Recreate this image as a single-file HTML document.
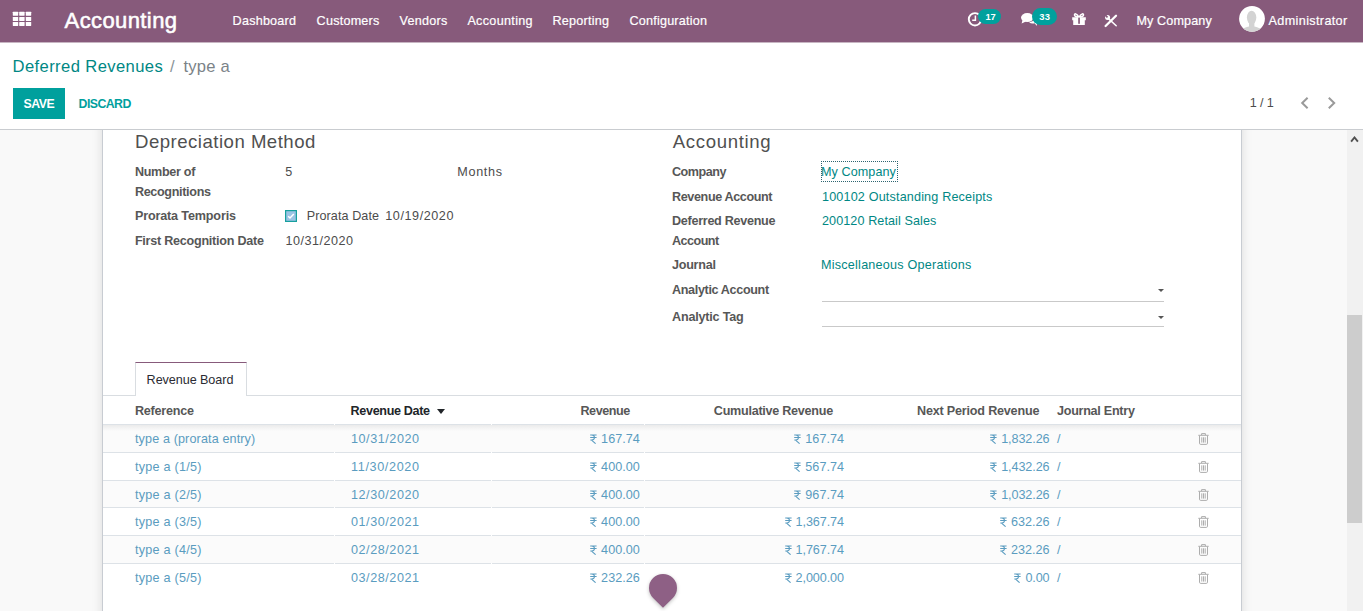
<!DOCTYPE html>
<html lang="en">
<head>
<meta charset="utf-8">
<title>Odoo - type a</title>
<style>
html,body{margin:0;padding:0;}
body{width:1365px;height:611px;overflow:hidden;background:#fff;position:relative;font-family:"Liberation Sans",sans-serif;font-size:12.6px;color:#4c4c4c;}
.a{position:absolute;display:block;}
.t{position:absolute;white-space:nowrap;display:block;}
#navbar{position:absolute;left:0;top:0;width:1363px;height:42px;background:#875A7B;box-shadow:0 1px 0 #c7b5c2;}
#cp{position:absolute;left:0;top:42px;width:1363px;height:86px;background:#fff;border-top:1px solid #c7b5c2;border-bottom:1px solid #c9ccd0;}
#content{position:absolute;left:0;top:130px;width:1347px;height:481px;background:#f9f9f9;overflow:hidden;}
#sheet{position:absolute;left:102px;top:-60px;width:1138px;height:620px;background:#fff;border:1px solid #c8ccd2;box-shadow:0 0 12px -2px rgba(0,0,0,.16);}
#vscroll{position:absolute;left:1347px;top:130px;width:16px;height:481px;background:#f1f1f1;}
#vthumb{position:absolute;left:0;top:185px;width:15px;height:208px;background:#cdcdcd;}
.btn-save{position:absolute;left:13px;top:88px;width:52px;height:30.6px;background:#00A09D;border-radius:0;}
.badge{position:absolute;background:#00A09D;border-radius:9px;}
.uline{position:absolute;height:1px;background:#c9c9c9;left:822px;width:342px;}
.caret{position:absolute;width:0;height:0;border-left:3.2px solid transparent;border-right:3.2px solid transparent;border-top:3.4px solid #555;}
.rowline{position:absolute;left:103px;width:1138px;height:1px;background:#dde2e7;}
.stripe{position:absolute;left:103px;width:1138px;height:27px;background:#fbfbfb;}
.gap{position:absolute;width:1px;height:1px;background:#fff;}
</style>
</head>
<body>

<div id="content"><div id="sheet"></div></div>
<div id="vscroll"><svg class="a" style="left:3px;top:6px" width="9" height="7" viewBox="0 0 9 7"><path d="M1.1 5.7L4.5 1.5L7.9 5.7" fill="none" stroke="#505050" stroke-width="1.9"/></svg><div id="vthumb"></div></div>
<div id="navbar">
<svg class="a" style="left:12px;top:11px" width="20" height="16" viewBox="12 11 20 16" fill="#fff">
<rect x="12.8" y="11.8" width="5.4" height="3.9" rx="0.4"/>
<rect x="12.8" y="17" width="5.4" height="3.9" rx="0.4"/>
<rect x="12.8" y="22.1" width="5.4" height="3.9" rx="0.4"/>
<rect x="19.2" y="11.8" width="5.4" height="3.9" rx="0.4"/>
<rect x="19.2" y="17" width="5.4" height="3.9" rx="0.4"/>
<rect x="19.2" y="22.1" width="5.4" height="3.9" rx="0.4"/>
<rect x="25.8" y="11.8" width="5.4" height="3.9" rx="0.4"/>
<rect x="25.8" y="17" width="5.4" height="3.9" rx="0.4"/>
<rect x="25.8" y="22.1" width="5.4" height="3.9" rx="0.4"/>
</svg>
<svg class="a" style="left:966px;top:10px" width="18" height="18" viewBox="966 10 18 18"><circle cx="975" cy="19.3" r="6.2" fill="none" stroke="#fff" stroke-width="1.9"/><path d="M975.4 15.6V20.2H972.2" fill="none" stroke="#fff" stroke-width="1.5"/></svg>
<div class="badge" style="left:978px;top:8.8px;width:23px;height:15.2px;border-radius:7.6px"></div>
<svg class="a" style="left:1020px;top:12px" width="18" height="15" viewBox="1020 12 18 15" fill="#fff"><ellipse cx="1027.3" cy="17.6" rx="6.3" ry="4.5"/><path d="M1022.5 20L1021.6 23.6L1026 21.6Z"/><path d="M1029 22.6C1031 23.8 1033.5 23.6 1034.6 23.2L1037 26L1036.6 22C1037.6 21 1037.6 19 1036 17.6L1033 21Z"/></svg>
<div class="badge" style="left:1032px;top:7.7px;width:25px;height:17.5px;border-radius:8.75px"></div>
<svg class="a" style="left:1071px;top:12px" width="16" height="14" viewBox="1071 12 16 14"><path d="M1072.2 17.2H1085.8V20.2H1072.2Z M1073.2 20.2H1084.8V25H1073.2Z" fill="#fff"/><path d="M1079 17.2C1077 13 1073.8 13.2 1074.6 15.4C1075 16.6 1077 17 1079 17.2C1081 13 1084.2 13.2 1083.4 15.4C1083 16.6 1081 17 1079 17.2Z" fill="none" stroke="#fff" stroke-width="1.5"/><rect x="1078.2" y="17.6" width="1.7" height="6.2" fill="#875A7B"/></svg>
<svg class="a" style="left:1103px;top:13px" width="16" height="15" viewBox="1103 13 16 15"><path d="M1105.6 26L1116 15.8" stroke="#fff" stroke-width="2.3" stroke-linecap="round" fill="none"/><path d="M1108.2 18.4L1116.2 25.8" stroke="#fff" stroke-width="1.5" stroke-linecap="round" fill="none"/><circle cx="1107.6" cy="17.4" r="2.5" fill="#fff"/><path d="M1104.4 14.2L1107.5 17.3" stroke="#875A7B" stroke-width="1.7" fill="none"/></svg>
<svg class="a" style="left:1238px;top:5px" width="28" height="28" viewBox="0 0 28 28"><defs><clipPath id="av"><circle cx="14" cy="13.8" r="12.9"/></clipPath></defs><circle cx="14" cy="13.8" r="12.9" fill="#fff"/><g clip-path="url(#av)" fill="#d3d3d3"><ellipse cx="13.6" cy="12.6" rx="4.7" ry="6.8"/><path d="M11 17H16.4V21.5C19 22 22 23 23.5 24.5V28H3.5V24.5C5 23 8.4 22 11 21.5Z"/></g></svg>
<span class="t" id="t0" style="left:64.60px;top:4.25px;font-size:22px;line-height:33px;color:#fff;letter-spacing:0.398px;-webkit-text-stroke:0.55px #fff;">Accounting</span>
<span class="t" id="t1" style="left:232.60px;top:11.80px;font-size:12.6px;line-height:18.9px;color:#fff;letter-spacing:0.224px;-webkit-text-stroke:0.2px #fff;">Dashboard</span>
<span class="t" id="t2" style="left:316.60px;top:11.80px;font-size:12.6px;line-height:18.9px;color:#fff;letter-spacing:0.227px;-webkit-text-stroke:0.2px #fff;">Customers</span>
<span class="t" id="t3" style="left:399.40px;top:11.80px;font-size:12.6px;line-height:18.9px;color:#fff;letter-spacing:0.281px;-webkit-text-stroke:0.2px #fff;">Vendors</span>
<span class="t" id="t4" style="left:467.40px;top:11.80px;font-size:12.6px;line-height:18.9px;color:#fff;letter-spacing:0.321px;-webkit-text-stroke:0.2px #fff;">Accounting</span>
<span class="t" id="t5" style="left:552.40px;top:11.80px;font-size:12.6px;line-height:18.9px;color:#fff;letter-spacing:0.250px;-webkit-text-stroke:0.2px #fff;">Reporting</span>
<span class="t" id="t6" style="left:629.40px;top:11.80px;font-size:12.6px;line-height:18.9px;color:#fff;letter-spacing:0.224px;-webkit-text-stroke:0.2px #fff;">Configuration</span>
<span class="t" id="t7" style="left:1136.40px;top:11.80px;font-size:12.6px;line-height:18.9px;color:#fff;letter-spacing:0.124px;-webkit-text-stroke:0.2px #fff;">My Company</span>
<span class="t" id="t8" style="left:1268.60px;top:11.80px;font-size:12.6px;line-height:18.9px;color:#fff;letter-spacing:0.367px;-webkit-text-stroke:0.2px #fff;">Administrator</span>
<span class="t" id="t9" style="left:985.40px;top:9.70px;font-size:9.4px;line-height:14.1px;color:#fff;font-weight:700;letter-spacing:-0.214px;">17</span>
<span class="t" id="t10" style="left:1039.30px;top:9.70px;font-size:9.4px;line-height:14.1px;color:#fff;font-weight:700;letter-spacing:0.186px;">33</span>
</div>
<div id="cp" style="top:42px"></div>
<div class="btn-save"></div>
<span class="t" id="t11" style="left:12.60px;top:54.90px;font-size:16.6px;line-height:24.9px;color:#008784;letter-spacing:0.388px;">Deferred Revenues</span>
<span class="t" id="t12" style="left:170.00px;top:54.90px;font-size:16.6px;line-height:24.9px;color:#8a9499;">/</span>
<span class="t" id="t13" style="left:183.60px;top:54.90px;font-size:16.6px;line-height:24.9px;color:#7b8388;letter-spacing:0.165px;">type a</span>
<span class="t" id="t14" style="left:23.40px;top:95.03px;font-size:12.3px;line-height:18.45px;color:#fff;font-weight:700;letter-spacing:-0.390px;">SAVE</span>
<span class="t" id="t15" style="left:78.60px;top:95.03px;font-size:12.3px;line-height:18.45px;color:#00A09D;font-weight:700;letter-spacing:-0.557px;">DISCARD</span>
<span class="t" id="t16" style="left:1249.80px;top:93.60px;font-size:12.6px;line-height:18.9px;color:#4c4c4c;letter-spacing:-0.150px;">1 / 1</span>
<svg class="a" style="left:1299px;top:96px" width="11" height="14" viewBox="0 0 11 14"><path d="M8.6 1.7L3.2 7L8.6 12.3" fill="none" stroke="#9a9a9a" stroke-width="2"/></svg>
<svg class="a" style="left:1326px;top:96px" width="11" height="14" viewBox="0 0 11 14"><path d="M2.8 1.7L8.2 7L2.8 12.3" fill="none" stroke="#9a9a9a" stroke-width="2"/></svg>
<span class="t" id="t17" style="left:135.00px;top:128.30px;font-size:18.6px;line-height:27.9px;color:#505050;letter-spacing:0.487px;">Depreciation Method</span>
<span class="t" id="t18" style="left:672.80px;top:128.30px;font-size:18.6px;line-height:27.9px;color:#505050;letter-spacing:0.649px;">Accounting</span>
<span class="t" id="t19" style="left:134.90px;top:162.80px;font-size:12.6px;line-height:18.9px;color:#575757;font-weight:700;letter-spacing:-0.309px;">Number of</span>
<span class="t" id="t20" style="left:134.90px;top:182.80px;font-size:12.6px;line-height:18.9px;color:#575757;font-weight:700;letter-spacing:-0.333px;">Recognitions</span>
<span class="t" id="t21" style="left:134.90px;top:206.80px;font-size:12.6px;line-height:18.9px;color:#575757;font-weight:700;letter-spacing:-0.149px;">Prorata Temporis</span>
<span class="t" id="t22" style="left:134.90px;top:231.80px;font-size:12.6px;line-height:18.9px;color:#575757;font-weight:700;letter-spacing:-0.250px;">First Recognition Date</span>
<span class="t" id="t23" style="left:285.30px;top:162.80px;font-size:12.6px;line-height:18.9px;color:#4c4c4c;">5</span>
<span class="t" id="t24" style="left:457.30px;top:162.80px;font-size:12.6px;line-height:18.9px;color:#4c4c4c;letter-spacing:0.680px;">Months</span>
<span class="t" id="t25" style="left:306.70px;top:206.80px;font-size:12.6px;line-height:18.9px;color:#4c4c4c;letter-spacing:0.082px;">Prorata Date</span>
<span class="t" id="t26" style="left:385.30px;top:206.80px;font-size:12.6px;line-height:18.9px;color:#4c4c4c;letter-spacing:0.564px;">10/19/2020</span>
<span class="t" id="t27" style="left:285.50px;top:231.80px;font-size:12.6px;line-height:18.9px;color:#4c4c4c;letter-spacing:0.497px;">10/31/2020</span>
<span class="t" id="t28" style="left:672.00px;top:162.80px;font-size:12.6px;line-height:18.9px;color:#575757;font-weight:700;letter-spacing:-0.496px;">Company</span>
<span class="t" id="t29" style="left:672.00px;top:187.80px;font-size:12.6px;line-height:18.9px;color:#575757;font-weight:700;letter-spacing:-0.384px;">Revenue Account</span>
<span class="t" id="t30" style="left:672.00px;top:211.80px;font-size:12.6px;line-height:18.9px;color:#575757;font-weight:700;letter-spacing:-0.286px;">Deferred Revenue</span>
<span class="t" id="t31" style="left:672.00px;top:231.80px;font-size:12.6px;line-height:18.9px;color:#575757;font-weight:700;letter-spacing:-0.530px;">Account</span>
<span class="t" id="t32" style="left:672.00px;top:256.20px;font-size:12.6px;line-height:18.9px;color:#575757;font-weight:700;letter-spacing:-0.265px;">Journal</span>
<span class="t" id="t33" style="left:672.00px;top:280.80px;font-size:12.6px;line-height:18.9px;color:#575757;font-weight:700;letter-spacing:-0.351px;">Analytic Account</span>
<span class="t" id="t34" style="left:672.00px;top:308.20px;font-size:12.6px;line-height:18.9px;color:#575757;font-weight:700;letter-spacing:-0.205px;">Analytic Tag</span>
<span class="t" id="t35" style="left:821.00px;top:162.80px;font-size:12.6px;line-height:18.9px;color:#008784;letter-spacing:0.079px;">My Company</span>
<span class="t" id="t36" style="left:822.00px;top:187.80px;font-size:12.6px;line-height:18.9px;color:#008784;letter-spacing:0.168px;">100102 Outstanding Receipts</span>
<span class="t" id="t37" style="left:822.00px;top:211.80px;font-size:12.6px;line-height:18.9px;color:#008784;letter-spacing:0.087px;">200120 Retail Sales</span>
<span class="t" id="t38" style="left:821.00px;top:256.20px;font-size:12.6px;line-height:18.9px;color:#008784;letter-spacing:0.235px;">Miscellaneous Operations</span>
<svg class="a" style="left:285px;top:210px" width="12" height="12" viewBox="0 0 12 12"><rect x="0.6" y="0.6" width="10.8" height="10.8" fill="#9cc3e4" stroke="#17a09e" stroke-width="1.2"/><path d="M3.2 6.2L5 8L8.8 4" fill="none" stroke="#fff" stroke-width="1.5"/></svg>
<div class="a" style="left:820.5px;top:161px;width:77.5px;height:21px;border:1px dotted #2c6470;box-sizing:border-box"></div>
<div class="uline" style="top:301px"></div><div class="uline" style="top:326px"></div>
<div class="caret" style="left:1157.7px;top:289.3px"></div><div class="caret" style="left:1157.7px;top:316px"></div>
<div class="a" style="left:103px;top:395px;width:1138px;height:1px;background:#d9dde1"></div>
<div class="a" style="left:135px;top:362px;width:112px;height:34px;box-sizing:border-box;background:#fff;border:1px solid #d9dde1;border-top:1px solid #875A7B;border-bottom:none"></div>
<span class="t" id="t39" style="left:146.60px;top:371.30px;font-size:12.6px;line-height:18.9px;color:#2b2b33;letter-spacing:-0.059px;">Revenue Board</span>
<div class="stripe" style="top:425px;height:27px"></div>
<div class="stripe" style="top:481px;height:26px"></div>
<div class="stripe" style="top:536px;height:27px"></div>
<div class="a" style="left:103px;top:425px;width:1138px;height:6px;background:linear-gradient(#ebebeb,rgba(248,248,248,0))"></div>
<div class="rowline" style="top:424px"></div>
<div class="rowline" style="top:452px"></div>
<div class="rowline" style="top:480px"></div>
<div class="rowline" style="top:507px"></div>
<div class="rowline" style="top:535px"></div>
<div class="rowline" style="top:563px"></div>
<div class="gap" style="left:334px;top:424px"></div>
<div class="gap" style="left:491px;top:424px"></div>
<div class="gap" style="left:644px;top:424px"></div>
<div class="gap" style="left:334px;top:452px"></div>
<div class="gap" style="left:491px;top:452px"></div>
<div class="gap" style="left:644px;top:452px"></div>
<div class="gap" style="left:334px;top:480px"></div>
<div class="gap" style="left:491px;top:480px"></div>
<div class="gap" style="left:644px;top:480px"></div>
<div class="gap" style="left:334px;top:507px"></div>
<div class="gap" style="left:491px;top:507px"></div>
<div class="gap" style="left:644px;top:507px"></div>
<div class="gap" style="left:334px;top:535px"></div>
<div class="gap" style="left:491px;top:535px"></div>
<div class="gap" style="left:644px;top:535px"></div>
<div class="gap" style="left:334px;top:563px"></div>
<div class="gap" style="left:491px;top:563px"></div>
<div class="gap" style="left:644px;top:563px"></div>
<span class="t" id="t40" style="left:135.00px;top:402.10px;font-size:12.6px;line-height:18.9px;color:#575757;font-weight:700;letter-spacing:-0.237px;">Reference</span>
<span class="t" id="t41" style="left:350.60px;top:402.10px;font-size:12.6px;line-height:18.9px;color:#212529;font-weight:700;letter-spacing:-0.353px;">Revenue Date</span>
<span class="t" id="t42" style="left:580.40px;top:402.10px;font-size:12.6px;line-height:18.9px;color:#575757;font-weight:700;letter-spacing:-0.432px;">Revenue</span>
<span class="t" id="t43" style="left:713.80px;top:402.10px;font-size:12.6px;line-height:18.9px;color:#575757;font-weight:700;letter-spacing:-0.263px;">Cumulative Revenue</span>
<span class="t" id="t44" style="left:917.10px;top:402.10px;font-size:12.6px;line-height:18.9px;color:#575757;font-weight:700;letter-spacing:-0.204px;">Next Period Revenue</span>
<span class="t" id="t45" style="left:1057.00px;top:402.10px;font-size:12.6px;line-height:18.9px;color:#575757;font-weight:700;letter-spacing:-0.273px;">Journal Entry</span>
<span class="t" id="t46" style="left:135.00px;top:429.80px;font-size:12.6px;line-height:18.9px;color:#5a9cc0;letter-spacing:0.124px;">type a (prorata entry)</span>
<span class="t" id="t47" style="left:351.00px;top:429.80px;font-size:12.6px;line-height:18.9px;color:#5a9cc0;letter-spacing:0.553px;">10/31/2020</span>
<span class="t" id="t48" style="left:601.10px;top:429.80px;font-size:12.6px;line-height:18.9px;color:#5a9cc0;letter-spacing:0.037px;">167.74</span>
<span class="t" id="t49" style="left:805.30px;top:429.80px;font-size:12.6px;line-height:18.9px;color:#5a9cc0;letter-spacing:0.037px;">167.74</span>
<span class="t" id="t50" style="left:1001.20px;top:429.80px;font-size:12.6px;line-height:18.9px;color:#5a9cc0;letter-spacing:-0.088px;">1,832.26</span>
<span class="t" id="t51" style="left:1057.00px;top:429.80px;font-size:12.6px;line-height:18.9px;color:#5a9cc0;">/</span>
<span class="t" id="t52" style="left:135.00px;top:457.80px;font-size:12.6px;line-height:18.9px;color:#5a9cc0;letter-spacing:0.254px;">type a (1/5)</span>
<span class="t" id="t53" style="left:351.00px;top:457.80px;font-size:12.6px;line-height:18.9px;color:#5a9cc0;letter-spacing:0.657px;">11/30/2020</span>
<span class="t" id="t54" style="left:601.10px;top:457.80px;font-size:12.6px;line-height:18.9px;color:#5a9cc0;letter-spacing:0.037px;">400.00</span>
<span class="t" id="t55" style="left:805.30px;top:457.80px;font-size:12.6px;line-height:18.9px;color:#5a9cc0;letter-spacing:0.037px;">567.74</span>
<span class="t" id="t56" style="left:1001.20px;top:457.80px;font-size:12.6px;line-height:18.9px;color:#5a9cc0;letter-spacing:-0.088px;">1,432.26</span>
<span class="t" id="t57" style="left:1057.00px;top:457.80px;font-size:12.6px;line-height:18.9px;color:#5a9cc0;">/</span>
<span class="t" id="t58" style="left:135.00px;top:485.80px;font-size:12.6px;line-height:18.9px;color:#5a9cc0;letter-spacing:0.254px;">type a (2/5)</span>
<span class="t" id="t59" style="left:351.00px;top:485.80px;font-size:12.6px;line-height:18.9px;color:#5a9cc0;letter-spacing:0.553px;">12/30/2020</span>
<span class="t" id="t60" style="left:601.10px;top:485.80px;font-size:12.6px;line-height:18.9px;color:#5a9cc0;letter-spacing:0.037px;">400.00</span>
<span class="t" id="t61" style="left:805.30px;top:485.80px;font-size:12.6px;line-height:18.9px;color:#5a9cc0;letter-spacing:0.037px;">967.74</span>
<span class="t" id="t62" style="left:1001.20px;top:485.80px;font-size:12.6px;line-height:18.9px;color:#5a9cc0;letter-spacing:-0.088px;">1,032.26</span>
<span class="t" id="t63" style="left:1057.00px;top:485.80px;font-size:12.6px;line-height:18.9px;color:#5a9cc0;">/</span>
<span class="t" id="t64" style="left:135.00px;top:512.80px;font-size:12.6px;line-height:18.9px;color:#5a9cc0;letter-spacing:0.254px;">type a (3/5)</span>
<span class="t" id="t65" style="left:351.00px;top:512.80px;font-size:12.6px;line-height:18.9px;color:#5a9cc0;letter-spacing:0.553px;">01/30/2021</span>
<span class="t" id="t66" style="left:601.10px;top:512.80px;font-size:12.6px;line-height:18.9px;color:#5a9cc0;letter-spacing:0.037px;">400.00</span>
<span class="t" id="t67" style="left:795.60px;top:512.80px;font-size:12.6px;line-height:18.9px;color:#5a9cc0;letter-spacing:-0.088px;">1,367.74</span>
<span class="t" id="t68" style="left:1010.90px;top:512.80px;font-size:12.6px;line-height:18.9px;color:#5a9cc0;letter-spacing:0.037px;">632.26</span>
<span class="t" id="t69" style="left:1057.00px;top:512.80px;font-size:12.6px;line-height:18.9px;color:#5a9cc0;">/</span>
<span class="t" id="t70" style="left:135.00px;top:540.80px;font-size:12.6px;line-height:18.9px;color:#5a9cc0;letter-spacing:0.254px;">type a (4/5)</span>
<span class="t" id="t71" style="left:351.00px;top:540.80px;font-size:12.6px;line-height:18.9px;color:#5a9cc0;letter-spacing:0.553px;">02/28/2021</span>
<span class="t" id="t72" style="left:601.10px;top:540.80px;font-size:12.6px;line-height:18.9px;color:#5a9cc0;letter-spacing:0.037px;">400.00</span>
<span class="t" id="t73" style="left:795.60px;top:540.80px;font-size:12.6px;line-height:18.9px;color:#5a9cc0;letter-spacing:-0.088px;">1,767.74</span>
<span class="t" id="t74" style="left:1010.90px;top:540.80px;font-size:12.6px;line-height:18.9px;color:#5a9cc0;letter-spacing:0.037px;">232.26</span>
<span class="t" id="t75" style="left:1057.00px;top:540.80px;font-size:12.6px;line-height:18.9px;color:#5a9cc0;">/</span>
<span class="t" id="t76" style="left:135.00px;top:568.80px;font-size:12.6px;line-height:18.9px;color:#5a9cc0;letter-spacing:0.254px;">type a (5/5)</span>
<span class="t" id="t77" style="left:351.00px;top:568.80px;font-size:12.6px;line-height:18.9px;color:#5a9cc0;letter-spacing:0.553px;">03/28/2021</span>
<span class="t" id="t78" style="left:601.10px;top:568.80px;font-size:12.6px;line-height:18.9px;color:#5a9cc0;letter-spacing:0.037px;">232.26</span>
<span class="t" id="t79" style="left:795.60px;top:568.80px;font-size:12.6px;line-height:18.9px;color:#5a9cc0;letter-spacing:-0.088px;">2,000.00</span>
<span class="t" id="t80" style="left:1025.40px;top:568.80px;font-size:12.6px;line-height:18.9px;color:#5a9cc0;letter-spacing:-0.102px;">0.00</span>
<span class="t" id="t81" style="left:1057.00px;top:568.80px;font-size:12.6px;line-height:18.9px;color:#5a9cc0;">/</span>
<div class="a" style="left:437px;top:408.8px;width:0;height:0;border-left:4.3px solid transparent;border-right:4.3px solid transparent;border-top:5.2px solid #212529"></div>
<svg class="a" style="left:590.00px;top:434.00px" width="7" height="10" viewBox="0 0 7 10"><path d="M0.2 0.9H6.6M0.2 3.4H6.6M1.6 0.9C5.4 0.9 5.4 5.9 1.6 5.9H0.3M1.3 5.9L5.6 9.7" fill="none" stroke="#5a9cc0" stroke-width="1.05"/></svg>
<svg class="a" style="left:794.00px;top:434.00px" width="7" height="10" viewBox="0 0 7 10"><path d="M0.2 0.9H6.6M0.2 3.4H6.6M1.6 0.9C5.4 0.9 5.4 5.9 1.6 5.9H0.3M1.3 5.9L5.6 9.7" fill="none" stroke="#5a9cc0" stroke-width="1.05"/></svg>
<svg class="a" style="left:990.00px;top:434.00px" width="7" height="10" viewBox="0 0 7 10"><path d="M0.2 0.9H6.6M0.2 3.4H6.6M1.6 0.9C5.4 0.9 5.4 5.9 1.6 5.9H0.3M1.3 5.9L5.6 9.7" fill="none" stroke="#5a9cc0" stroke-width="1.05"/></svg>
<svg class="a" style="left:590.00px;top:462.00px" width="7" height="10" viewBox="0 0 7 10"><path d="M0.2 0.9H6.6M0.2 3.4H6.6M1.6 0.9C5.4 0.9 5.4 5.9 1.6 5.9H0.3M1.3 5.9L5.6 9.7" fill="none" stroke="#5a9cc0" stroke-width="1.05"/></svg>
<svg class="a" style="left:794.00px;top:462.00px" width="7" height="10" viewBox="0 0 7 10"><path d="M0.2 0.9H6.6M0.2 3.4H6.6M1.6 0.9C5.4 0.9 5.4 5.9 1.6 5.9H0.3M1.3 5.9L5.6 9.7" fill="none" stroke="#5a9cc0" stroke-width="1.05"/></svg>
<svg class="a" style="left:990.00px;top:462.00px" width="7" height="10" viewBox="0 0 7 10"><path d="M0.2 0.9H6.6M0.2 3.4H6.6M1.6 0.9C5.4 0.9 5.4 5.9 1.6 5.9H0.3M1.3 5.9L5.6 9.7" fill="none" stroke="#5a9cc0" stroke-width="1.05"/></svg>
<svg class="a" style="left:590.00px;top:490.00px" width="7" height="10" viewBox="0 0 7 10"><path d="M0.2 0.9H6.6M0.2 3.4H6.6M1.6 0.9C5.4 0.9 5.4 5.9 1.6 5.9H0.3M1.3 5.9L5.6 9.7" fill="none" stroke="#5a9cc0" stroke-width="1.05"/></svg>
<svg class="a" style="left:794.00px;top:490.00px" width="7" height="10" viewBox="0 0 7 10"><path d="M0.2 0.9H6.6M0.2 3.4H6.6M1.6 0.9C5.4 0.9 5.4 5.9 1.6 5.9H0.3M1.3 5.9L5.6 9.7" fill="none" stroke="#5a9cc0" stroke-width="1.05"/></svg>
<svg class="a" style="left:990.00px;top:490.00px" width="7" height="10" viewBox="0 0 7 10"><path d="M0.2 0.9H6.6M0.2 3.4H6.6M1.6 0.9C5.4 0.9 5.4 5.9 1.6 5.9H0.3M1.3 5.9L5.6 9.7" fill="none" stroke="#5a9cc0" stroke-width="1.05"/></svg>
<svg class="a" style="left:590.00px;top:517.00px" width="7" height="10" viewBox="0 0 7 10"><path d="M0.2 0.9H6.6M0.2 3.4H6.6M1.6 0.9C5.4 0.9 5.4 5.9 1.6 5.9H0.3M1.3 5.9L5.6 9.7" fill="none" stroke="#5a9cc0" stroke-width="1.05"/></svg>
<svg class="a" style="left:784.50px;top:517.00px" width="7" height="10" viewBox="0 0 7 10"><path d="M0.2 0.9H6.6M0.2 3.4H6.6M1.6 0.9C5.4 0.9 5.4 5.9 1.6 5.9H0.3M1.3 5.9L5.6 9.7" fill="none" stroke="#5a9cc0" stroke-width="1.05"/></svg>
<svg class="a" style="left:999.50px;top:517.00px" width="7" height="10" viewBox="0 0 7 10"><path d="M0.2 0.9H6.6M0.2 3.4H6.6M1.6 0.9C5.4 0.9 5.4 5.9 1.6 5.9H0.3M1.3 5.9L5.6 9.7" fill="none" stroke="#5a9cc0" stroke-width="1.05"/></svg>
<svg class="a" style="left:590.00px;top:545.00px" width="7" height="10" viewBox="0 0 7 10"><path d="M0.2 0.9H6.6M0.2 3.4H6.6M1.6 0.9C5.4 0.9 5.4 5.9 1.6 5.9H0.3M1.3 5.9L5.6 9.7" fill="none" stroke="#5a9cc0" stroke-width="1.05"/></svg>
<svg class="a" style="left:784.50px;top:545.00px" width="7" height="10" viewBox="0 0 7 10"><path d="M0.2 0.9H6.6M0.2 3.4H6.6M1.6 0.9C5.4 0.9 5.4 5.9 1.6 5.9H0.3M1.3 5.9L5.6 9.7" fill="none" stroke="#5a9cc0" stroke-width="1.05"/></svg>
<svg class="a" style="left:999.50px;top:545.00px" width="7" height="10" viewBox="0 0 7 10"><path d="M0.2 0.9H6.6M0.2 3.4H6.6M1.6 0.9C5.4 0.9 5.4 5.9 1.6 5.9H0.3M1.3 5.9L5.6 9.7" fill="none" stroke="#5a9cc0" stroke-width="1.05"/></svg>
<svg class="a" style="left:590.00px;top:573.00px" width="7" height="10" viewBox="0 0 7 10"><path d="M0.2 0.9H6.6M0.2 3.4H6.6M1.6 0.9C5.4 0.9 5.4 5.9 1.6 5.9H0.3M1.3 5.9L5.6 9.7" fill="none" stroke="#5a9cc0" stroke-width="1.05"/></svg>
<svg class="a" style="left:784.50px;top:573.00px" width="7" height="10" viewBox="0 0 7 10"><path d="M0.2 0.9H6.6M0.2 3.4H6.6M1.6 0.9C5.4 0.9 5.4 5.9 1.6 5.9H0.3M1.3 5.9L5.6 9.7" fill="none" stroke="#5a9cc0" stroke-width="1.05"/></svg>
<svg class="a" style="left:1014.00px;top:573.00px" width="7" height="10" viewBox="0 0 7 10"><path d="M0.2 0.9H6.6M0.2 3.4H6.6M1.6 0.9C5.4 0.9 5.4 5.9 1.6 5.9H0.3M1.3 5.9L5.6 9.7" fill="none" stroke="#5a9cc0" stroke-width="1.05"/></svg>
<svg class="a" style="left:1198px;top:432.90px" width="11" height="12" viewBox="0 0 11 12"><path d="M0.3 2.3H10.7M3.6 2.1V0.6H7.4V2.1M1.5 2.6V10.2Q1.5 11.4 2.7 11.4H8.3Q9.5 11.4 9.5 10.2V2.6M3.8 4.3V9.6M5.5 4.3V9.6M7.2 4.3V9.6" fill="none" stroke="#adadad" stroke-width="1"/></svg>
<svg class="a" style="left:1198px;top:460.90px" width="11" height="12" viewBox="0 0 11 12"><path d="M0.3 2.3H10.7M3.6 2.1V0.6H7.4V2.1M1.5 2.6V10.2Q1.5 11.4 2.7 11.4H8.3Q9.5 11.4 9.5 10.2V2.6M3.8 4.3V9.6M5.5 4.3V9.6M7.2 4.3V9.6" fill="none" stroke="#adadad" stroke-width="1"/></svg>
<svg class="a" style="left:1198px;top:488.90px" width="11" height="12" viewBox="0 0 11 12"><path d="M0.3 2.3H10.7M3.6 2.1V0.6H7.4V2.1M1.5 2.6V10.2Q1.5 11.4 2.7 11.4H8.3Q9.5 11.4 9.5 10.2V2.6M3.8 4.3V9.6M5.5 4.3V9.6M7.2 4.3V9.6" fill="none" stroke="#adadad" stroke-width="1"/></svg>
<svg class="a" style="left:1198px;top:515.90px" width="11" height="12" viewBox="0 0 11 12"><path d="M0.3 2.3H10.7M3.6 2.1V0.6H7.4V2.1M1.5 2.6V10.2Q1.5 11.4 2.7 11.4H8.3Q9.5 11.4 9.5 10.2V2.6M3.8 4.3V9.6M5.5 4.3V9.6M7.2 4.3V9.6" fill="none" stroke="#adadad" stroke-width="1"/></svg>
<svg class="a" style="left:1198px;top:543.90px" width="11" height="12" viewBox="0 0 11 12"><path d="M0.3 2.3H10.7M3.6 2.1V0.6H7.4V2.1M1.5 2.6V10.2Q1.5 11.4 2.7 11.4H8.3Q9.5 11.4 9.5 10.2V2.6M3.8 4.3V9.6M5.5 4.3V9.6M7.2 4.3V9.6" fill="none" stroke="#adadad" stroke-width="1"/></svg>
<svg class="a" style="left:1198px;top:571.90px" width="11" height="12" viewBox="0 0 11 12"><path d="M0.3 2.3H10.7M3.6 2.1V0.6H7.4V2.1M1.5 2.6V10.2Q1.5 11.4 2.7 11.4H8.3Q9.5 11.4 9.5 10.2V2.6M3.8 4.3V9.6M5.5 4.3V9.6M7.2 4.3V9.6" fill="none" stroke="#adadad" stroke-width="1"/></svg>
<div class="a" style="left:649px;top:573.7px;width:28px;height:28px;background:#8e6085;border-radius:50% 50% 0 50%;transform:rotate(45deg);box-shadow:1px 1px 4px rgba(0,0,0,.25)"></div>
</body>
</html>
